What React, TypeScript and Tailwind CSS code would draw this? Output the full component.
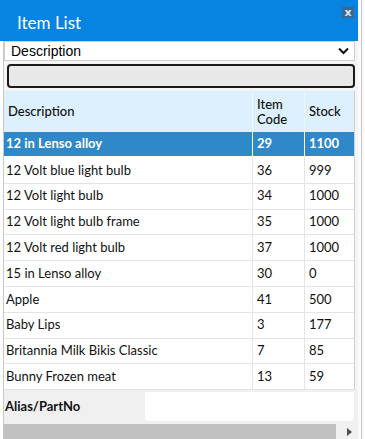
import React from "react";

interface Item {
  name: string;
  code: number;
  stock: number;
}

const items: Item[] = [
  { name: "12 in Lenso alloy", code: 29, stock: 1100 },
  { name: "12 Volt blue light bulb", code: 36, stock: 999 },
  { name: "12 Volt light bulb", code: 34, stock: 1000 },
  { name: "12 Volt light bulb frame", code: 35, stock: 1000 },
  { name: "12 Volt red light bulb", code: 37, stock: 1000 },
  { name: "15 in Lenso alloy", code: 30, stock: 0 },
  { name: "Apple", code: 41, stock: 500 },
  { name: "Baby Lips", code: 3, stock: 177 },
  { name: "Britannia Milk Bikis Classic", code: 7, stock: 85 },
  { name: "Bunny Frozen meat", code: 13, stock: 59 },
];

export default function App() {
  const selected = 0;

  return (
    <div className="w-[365px] h-[439px] bg-white flex overflow-hidden font-['Lato','Liberation_Sans',sans-serif] text-[#111]">
      <div className="w-[358px] flex flex-col relative">
        {/* title bar */}
        <div className="h-[41px] shrink-0 bg-[#0784e0] flex items-center pl-[17px]">
          <span className="text-white text-[17px] leading-none pt-[3px]">Item List</span>
          <button className="absolute top-[7px] right-[4px] w-[12px] h-[11px] bg-[#3a6890] text-[#dfe8f0] text-[11px] font-bold leading-none flex items-center justify-center font-['DejaVu_Sans',sans-serif]">
            x
          </button>
        </div>

        <div className="flex-1 flex flex-col ml-[3px] border-l border-[#c8c8c8] bg-[#f4f4f4]">
          {/* search by */}
          <div className="h-[20px] shrink-0 bg-white border border-[#cfcfcf] flex items-center justify-between pl-[6px] pr-[5px] mr-[3px]">
            <span className="text-[14px] text-black font-['Liberation_Sans',sans-serif]">Description</span>
            <svg width="11" height="8" viewBox="0 0 11 8">
              <path d="M1 1.5 L5.5 6 L10 1.5" fill="none" stroke="#111" strokeWidth="2" />
            </svg>
          </div>

          {/* search box */}
          <div className="h-[30px] shrink-0 pl-[3px] pr-[3px] pt-[3px] pb-[3px]">
            <div className="h-[24px] bg-[#e8e8e8] border-2 border-[#1a1a1a] rounded-[4px]" />
          </div>

          {/* table */}
          <div className="bg-white mr-[3px] border-r border-[#d0d0d0] text-[13px]">
            <div className="h-[41px] bg-[#dcf0fd] grid grid-cols-[248px_52px_1fr] font-medium">
              <div className="flex items-center pl-[4px]">Description</div>
              <div className="flex items-center pl-[4px] leading-[15px] border-l border-[#f0f8ff]">
                Item
                <br />
                Code
              </div>
              <div className="flex items-center pl-[4px] border-l border-[#f0f8ff]">Stock</div>
            </div>

            {items.map((item, i) => {
              const isSel = i === selected;
              return (
                <div
                  key={item.name}
                  className={
                    isSel
                      ? "h-[26px] grid grid-cols-[248px_52px_1fr] bg-[#2f88c7] text-white font-bold border-b-2 border-white"
                      : "h-[25.8px] grid grid-cols-[248px_52px_1fr] border-b border-[#e4e4e4]"
                  }
                >
                  <div className="flex items-center pl-[2px] whitespace-nowrap overflow-hidden">{item.name}</div>
                  <div
                    className={
                      isSel
                        ? "flex items-center pl-[4px] border-l border-white"
                        : "flex items-center pl-[4px] border-l border-[#e4e4e4]"
                    }
                  >
                    {item.code}
                  </div>
                  <div
                    className={
                      isSel
                        ? "flex items-center pl-[4px] border-l border-white"
                        : "flex items-center pl-[4px] border-l border-[#e4e4e4]"
                    }
                  >
                    {item.stock}
                  </div>
                </div>
              );
            })}
          </div>

          {/* alias */}
          <div className="flex-1 flex items-stretch bg-[#f0f0f0] pt-[2px] pb-[3px] pr-[4px]">
            <div className="w-[141px] flex items-center pl-[1px] text-[13px] font-bold">Alias/PartNo</div>
            <div className="flex-1 bg-white rounded-b-[4px]" />
          </div>

          {/* horizontal scrollbar */}
          <div className="h-[15px] shrink-0 flex">
            <div className="flex-1 bg-[#c1c1c1]" />
            <div className="w-[22px] bg-[#f0f0f0] flex items-center justify-end pr-[6px]">
              <svg width="5" height="8" viewBox="0 0 5 8">
                <path d="M0 0 L5 4 L0 8 Z" fill="#505050" />
              </svg>
            </div>
          </div>
        </div>
      </div>

      {/* page behind dialog */}
      <div className="flex-1 bg-[#fafafa] flex">
        <div className="w-[3px]" />
        <div className="w-[1px] bg-[#c8c8c8]" />
      </div>
    </div>
  );
}
